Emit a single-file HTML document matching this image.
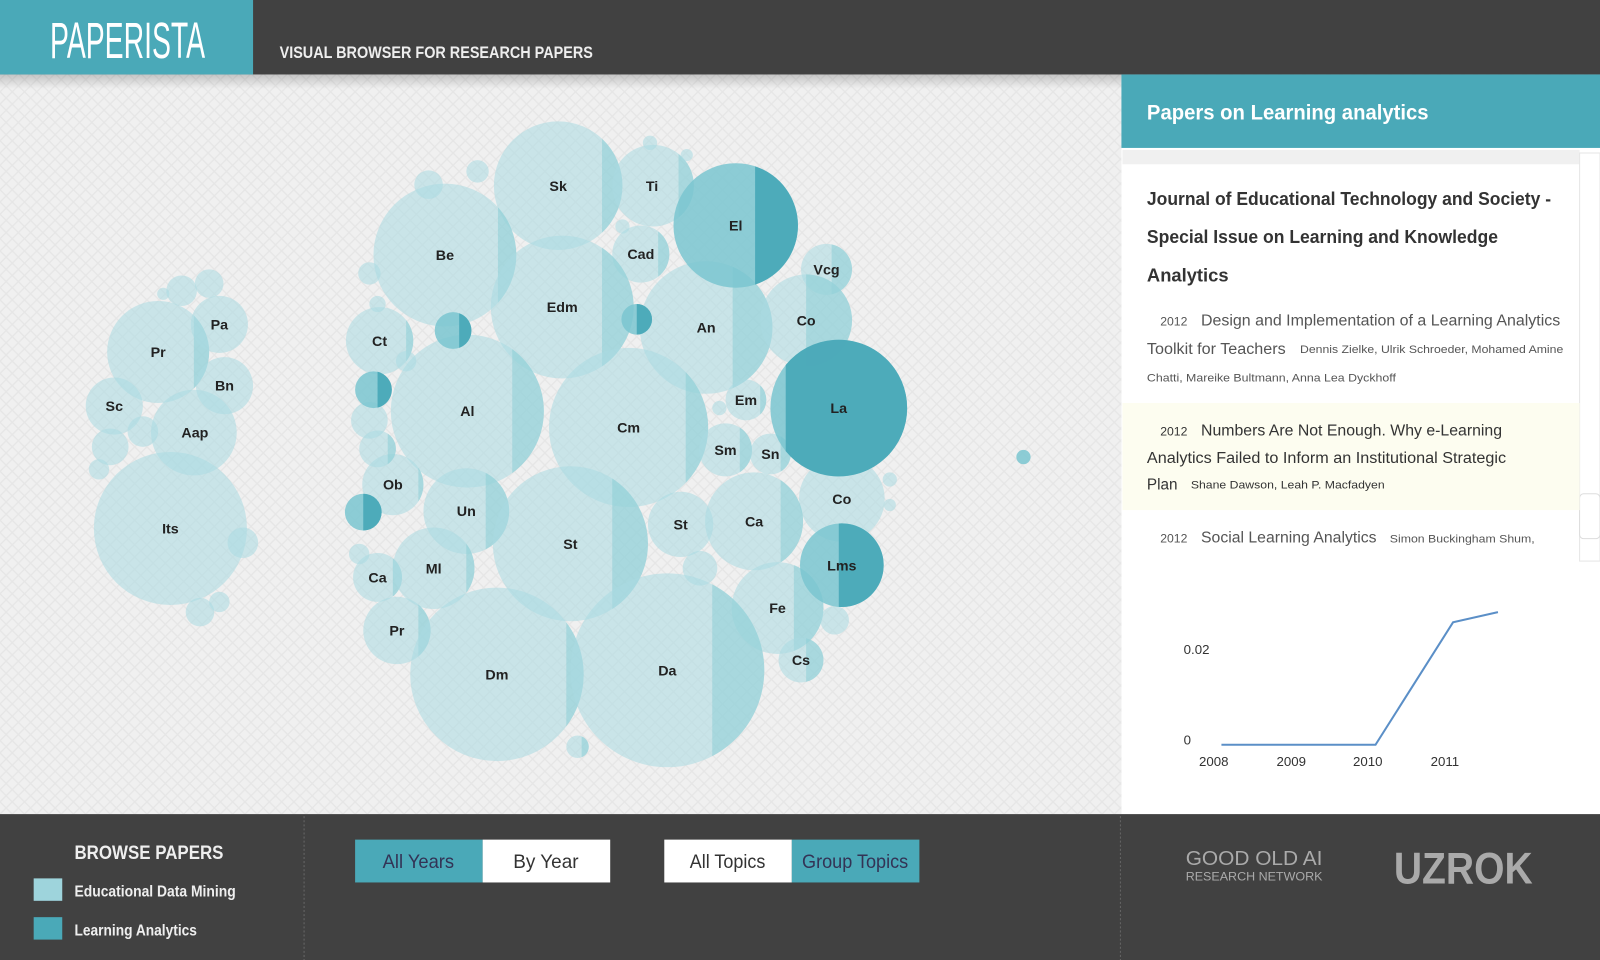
<!DOCTYPE html>
<html><head><meta charset="utf-8"><style>
html,body{margin:0;padding:0;width:1600px;height:960px;overflow:hidden;background:#efefef}
svg{display:block}
text{font-family:"Liberation Sans","DejaVu Sans",sans-serif}
</style></head><body>
<svg id="s" width="1600" height="960" viewBox="0 0 1568 941" preserveAspectRatio="none" xmlns="http://www.w3.org/2000/svg">
<defs>
<pattern id="hb" width="12" height="12" patternUnits="userSpaceOnUse">
<rect width="12" height="12" fill="#f0f0f0"/>
<path d="M0 6 L6 0 M6 12 L12 6 M0 6 L6 12 M6 0 L12 6" stroke="#e6e6e6" stroke-width="1.2" fill="none"/>
</pattern>
<linearGradient id="sh" x1="0" y1="0" x2="0" y2="1"><stop offset="0" stop-color="#000" stop-opacity=".18"/><stop offset="1" stop-color="#000" stop-opacity="0"/></linearGradient>
</defs>
<rect x="0" y="0" width="1568" height="941" fill="url(#hb)"/>
<g id="bub"></g>
<g font-weight="bold" font-size="14" fill="#222" text-anchor="middle">
<text x="155" y="350">Pr</text><text x="215" y="323">Pa</text><text x="220" y="383">Bn</text><text x="112" y="403">Sc</text><text x="191" y="429">Aap</text><text x="167" y="523">Its</text>
<text x="547" y="187">Sk</text><text x="639" y="187">Ti</text><text x="721" y="226">El</text><text x="436" y="255">Be</text><text x="628" y="254">Cad</text><text x="810" y="269">Vcg</text>
<text x="551" y="306">Edm</text><text x="692" y="326">An</text><text x="790" y="319">Co</text><text x="372" y="339">Ct</text><text x="458" y="408">Al</text><text x="616" y="424">Cm</text>
<text x="731" y="397">Em</text><text x="822" y="405">La</text><text x="711" y="446">Sm</text><text x="755" y="450">Sn</text><text x="385" y="480">Ob</text><text x="457" y="506">Un</text>
<text x="825" y="494">Co</text><text x="559" y="538">St</text><text x="667" y="519">St</text><text x="739" y="516">Ca</text><text x="370" y="571">Ca</text><text x="425" y="562">Ml</text>
<text x="825" y="559">Lms</text><text x="389" y="623">Pr</text><text x="762" y="601">Fe</text><text x="487" y="666">Dm</text><text x="654" y="662">Da</text><text x="785" y="652">Cs</text>
</g>
<!-- header -->
<rect x="0" y="73" width="1100" height="14" fill="url(#sh)"/>
<rect x="0" y="0" width="1568" height="73" fill="#414141"/>
<rect x="0" y="0" width="248" height="73" fill="#4aa9b8"/>
<text x="125" y="57" text-anchor="middle" fill="#fff" font-size="50" textLength="152" lengthAdjust="spacingAndGlyphs" font-family="Liberation Sans Narrow, Liberation Sans, sans-serif">PAPERISTA</text>
<text x="274" y="57" fill="#eee" font-size="16" font-weight="bold" textLength="307" lengthAdjust="spacingAndGlyphs">VISUAL BROWSER FOR RESEARCH PAPERS</text>
<!-- right panel -->
<rect x="1099" y="73" width="469" height="725" fill="#fff"/>
<rect x="1099" y="73" width="469" height="72" fill="#4aa9b8"/>
<text x="1124" y="117" fill="#fff" font-size="21" font-weight="bold" textLength="276" lengthAdjust="spacingAndGlyphs">Papers on Learning analytics</text>
<rect x="1100" y="147" width="448" height="14" fill="#f0f0f0"/>
<rect x="1548" y="150" width="20" height="400" fill="#fff" stroke="#e6e6e6"/>
<rect x="1548" y="484" width="20" height="44" rx="4" fill="#fff" stroke="#ddd"/>
<rect x="1100" y="395" width="448" height="105" fill="#fdfdf0"/>
<g fill="#333" font-size="18" font-weight="bold">
<text x="1124" y="201" textLength="396" lengthAdjust="spacingAndGlyphs">Journal of Educational Technology and Society -</text>
<text x="1124" y="238" textLength="344" lengthAdjust="spacingAndGlyphs">Special Issue on Learning and Knowledge</text>
<text x="1124" y="276">Analytics</text>
</g>
<g fill="#555" font-size="15">
<text x="1137" y="319" font-size="12">2012</text><text x="1177" y="319" textLength="352" lengthAdjust="spacingAndGlyphs">Design and Implementation of a Learning Analytics</text>
<text x="1124" y="347" textLength="136" lengthAdjust="spacingAndGlyphs">Toolkit for Teachers</text>
<text x="1274" y="346" font-size="11" textLength="258" lengthAdjust="spacingAndGlyphs">Dennis Zielke, Ulrik Schroeder, Mohamed Amine</text>
<text x="1124" y="374" font-size="11" textLength="244" lengthAdjust="spacingAndGlyphs">Chatti, Mareike Bultmann, Anna Lea Dyckhoff</text>
</g>
<g fill="#333" font-size="15">
<text x="1137" y="427" font-size="12">2012</text><text x="1177" y="427" textLength="295" lengthAdjust="spacingAndGlyphs">Numbers Are Not Enough. Why e-Learning</text>
<text x="1124" y="454" textLength="352" lengthAdjust="spacingAndGlyphs">Analytics Failed to Inform an Institutional Strategic</text>
<text x="1124" y="480">Plan</text>
<text x="1167" y="479" font-size="11" textLength="190" lengthAdjust="spacingAndGlyphs">Shane Dawson, Leah P. Macfadyen</text>
<text x="1137" y="532" font-size="12" fill="#555">2012</text><text x="1177" y="532" fill="#555" textLength="172" lengthAdjust="spacingAndGlyphs">Social Learning Analytics</text>
<text x="1362" y="532" font-size="11" fill="#555" textLength="142" lengthAdjust="spacingAndGlyphs">Simon Buckingham Shum,</text>
</g>
<g fill="#333" font-size="13">
<text x="1160" y="641">0.02</text><text x="1160" y="730">0</text>
<text x="1175" y="751">2008</text><text x="1251" y="751">2009</text><text x="1326" y="751">2010</text><text x="1402" y="751">2011</text>
</g>
<polyline points="1197,730 1348,730 1424,610 1468,600" fill="none" stroke="#5b8fc7" stroke-width="2"/>
<!-- footer -->
<rect x="0" y="798" width="1568" height="143" fill="#414141"/>
<line x1="298" y1="800" x2="298" y2="941" stroke="#666" stroke-dasharray="2,2"/>
<line x1="1098" y1="800" x2="1098" y2="941" stroke="#666" stroke-dasharray="2,2"/>
<text x="73" y="842" fill="#eee" font-size="19" font-weight="bold" textLength="146" lengthAdjust="spacingAndGlyphs">BROWSE PAPERS</text>
<rect x="33" y="861" width="28" height="22" fill="#9ed4dc"/>
<rect x="33" y="899" width="28" height="22" fill="#4aa9b8"/>
<text x="73" y="879" fill="#eee" font-size="15" font-weight="bold" textLength="158" lengthAdjust="spacingAndGlyphs">Educational Data Mining</text>
<text x="73" y="917" fill="#eee" font-size="15" font-weight="bold" textLength="120" lengthAdjust="spacingAndGlyphs">Learning Analytics</text>
<rect x="348" y="823" width="125" height="42" fill="#4aa9b8"/><rect x="473" y="823" width="125" height="42" fill="#fff"/>
<rect x="651" y="823" width="125" height="42" fill="#fff"/><rect x="776" y="823" width="125" height="42" fill="#4aa9b8"/>
<g font-size="19" text-anchor="middle">
<text x="410" y="851" fill="#335" textLength="70" lengthAdjust="spacingAndGlyphs">All Years</text>
<text x="535" y="851" fill="#333" textLength="64" lengthAdjust="spacingAndGlyphs">By Year</text>
<text x="713" y="851" fill="#333" textLength="74" lengthAdjust="spacingAndGlyphs">All Topics</text>
<text x="838" y="851" fill="#335" textLength="104" lengthAdjust="spacingAndGlyphs">Group Topics</text>
</g>
<text x="1162" y="848" fill="#aaa" font-size="20" textLength="134" lengthAdjust="spacingAndGlyphs">GOOD OLD AI</text>
<text x="1162" y="863" fill="#aaa" font-size="12" textLength="134" lengthAdjust="spacingAndGlyphs">RESEARCH NETWORK</text>
<text x="1366" y="866" fill="#aaa" font-size="44" font-weight="bold" textLength="136" lengthAdjust="spacingAndGlyphs">UZROK</text>
</svg>
<script>
var L=['rgba(170,218,226,0.55)','rgba(140,205,214,0.55)'];
var T=['rgba(122,198,208,0.85)','rgba(74,169,184,0.95)'];
var B=[
[155,345,50,190],[215,318,28,0],[220,378,28,0],[112,398,28,0],[190,424,42,0],[167,518,75,0],
[178,285,15,0],[205,278,14,0],[108,438,18,0],[140,423,15,0],[97,460,10,0],[238,532,15,0],[196,600,14,0],[215,590,10,0],[160,288,6,0],
[547,182,63,590],[640,182,40,665],[436,250,70,488],[628,249,28,645],[810,264,25,815],[551,301,70,590],[692,321,65,718],[790,314,45,790],
[372,334,33,398],[458,403,75,502],[616,419,78,672],[731,392,20,745],[711,441,26,725],[755,445,20,765],[385,475,30,410],[457,501,42,476],
[825,489,42,0],[559,533,76,600],[667,514,32,0],[739,511,48,765],[370,566,24,385],[425,557,40,457],[389,618,33,410],[762,596,45,778],
[487,661,85,555],[654,657,95,698],[785,647,22,790],
[420,181,14,0],[468,168,11,0],[637,140,7,0],[673,152,6,0],[610,222,7,0],[362,268,11,0],[370,298,8,0],[398,354,10,0],[362,412,18,0],[370,440,18,380],
[686,557,17,0],[566,732,11,570],[818,608,14,0],[872,470,7,0],[872,495,6,0],[705,400,7,0],[352,543,10,0]];
var TB=[[721,221,61,740],[822,400,67,770],[825,554,41,822],[444,324,18,450],[624,313,15,624],[366,382,18,370],[356,502,18,356],[1003,448,7,990]];
var g=document.getElementById('bub'),ns='http://www.w3.org/2000/svg',id=0;
function add(b,c){var cx=b[0],cy=b[1],r=b[2],sx=b[3];var ci=document.createElementNS(ns,'circle');
ci.setAttribute('cx',cx);ci.setAttribute('cy',cy);ci.setAttribute('r',r);ci.setAttribute('fill',c[0]);g.appendChild(ci);
if(sx>0&&sx<cx+r){var d=sx-cx;if(d<-r)d=-r;var h=Math.sqrt(r*r-d*d);var p=document.createElementNS(ns,'path');
p.setAttribute('d','M'+(cx+d)+' '+(cy-h)+' A'+r+' '+r+' 0 '+(d<0?1:0)+' 1 '+(cx+d)+' '+(cy+h)+' Z');p.setAttribute('fill',c[1]);g.appendChild(p);}}
B.forEach(function(b){add(b,L)});TB.forEach(function(b){add(b,T)});
</script>
</body></html>
